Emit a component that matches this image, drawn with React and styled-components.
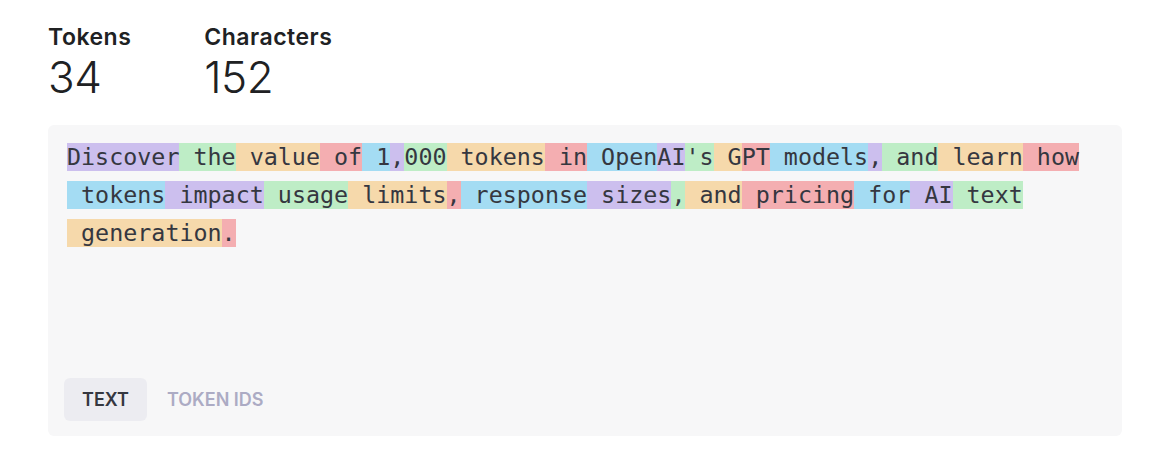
import React, { useState } from 'react';
import styled, { createGlobalStyle, css } from 'styled-components';

const GlobalStyle = createGlobalStyle`
  html, body {
    margin: 0;
    padding: 0;
    background: #ffffff;
  }
  body {
    font-family: Inter, "Noto Sans", sans-serif;
    color: #202123;
  }
`;

// token highlight colours, cycled in order
const PALETTE = [
  'rgba(107, 64, 216, 0.3)',
  'rgba(104, 222, 122, 0.4)',
  'rgba(244, 172, 54, 0.4)',
  'rgba(239, 65, 70, 0.4)',
  'rgba(39, 181, 234, 0.4)',
];

const TOKENS = [
  'Discover', ' the', ' value', ' of', ' 1', ',', '000', ' tokens', ' in', ' Open',
  'AI', "'s", ' G', 'PT', ' models', ',', ' and', ' learn', ' how', ' tokens',
  ' impact', ' usage', ' limits', ',', ' response', ' sizes', ',', ' and', ' pricing', ' for',
  ' AI', ' text', ' generation', '.',
];

const Page = styled.main`
  padding: 24px 43px 26px 48px;
`;

const Stats = styled.div`
  display: flex;
  gap: 73px;
  margin-bottom: 26px;
`;

const Stat = styled.div`
  display: flex;
  flex-direction: column;
  gap: 5px;
`;

const StatLabel = styled.div`
  font-size: 23px;
  line-height: 26px;
  font-weight: 600;
  letter-spacing: 0.5px;
  color: #202123;
`;

const StatValue = styled.div`
  font-size: 44px;
  line-height: 44px;
  font-weight: 300;
  color: #202123;
  letter-spacing: -0.5px;
`;

const Panel = styled.section`
  display: flex;
  flex-direction: column;
  height: 311px;
  box-sizing: border-box;
  background: #f7f7f8;
  border-radius: 6px;
`;

const Output = styled.div`
  flex: 1;
  padding: 13px 19px 0 19px;
  font-family: "DejaVu Sans Mono", "Liberation Mono", monospace;
  font-size: 23.35px;
  line-height: 38px;
  color: #353740;
`;

const Token = styled.span`
  display: inline-block;
  vertical-align: top;
  white-space: pre;
  line-height: 28px;
  height: 28px;
  margin: 5px 0;
  background: ${(p) => p.color};
`;

const Tabs = styled.div`
  display: flex;
  gap: 2px;
  padding: 0 16px 15px;
`;

const Tab = styled.button`
  border: none;
  border-radius: 6px;
  height: 43px;
  padding: 0 18px;
  font-family: Inter, "Noto Sans", sans-serif;
  font-size: 18px;
  font-weight: 600;
  background: transparent;
  color: #acabc4;
  cursor: pointer;
  ${(p) =>
    p.active &&
    css`
      background: #ececf1;
      color: #353740;
    `}
`;

export default function App() {
  const [view, setView] = useState('text');
  const text = TOKENS.join('');

  return (
    <>
      <GlobalStyle />
      <Page>
        <Stats>
          <Stat>
            <StatLabel>Tokens</StatLabel>
            <StatValue>{TOKENS.length}</StatValue>
          </Stat>
          <Stat>
            <StatLabel>Characters</StatLabel>
            <StatValue>{text.length}</StatValue>
          </Stat>
        </Stats>
        <Panel>
          <Output>
            {TOKENS.map((t, i) => (
              <Token key={i} color={PALETTE[i % PALETTE.length]}>
                {t}
              </Token>
            ))}
          </Output>
          <Tabs>
            <Tab active={view === 'text'} onClick={() => setView('text')}>
              TEXT
            </Tab>
            <Tab active={view === 'ids'} onClick={() => setView('ids')}>
              TOKEN IDS
            </Tab>
          </Tabs>
        </Panel>
      </Page>
    </>
  );
}
